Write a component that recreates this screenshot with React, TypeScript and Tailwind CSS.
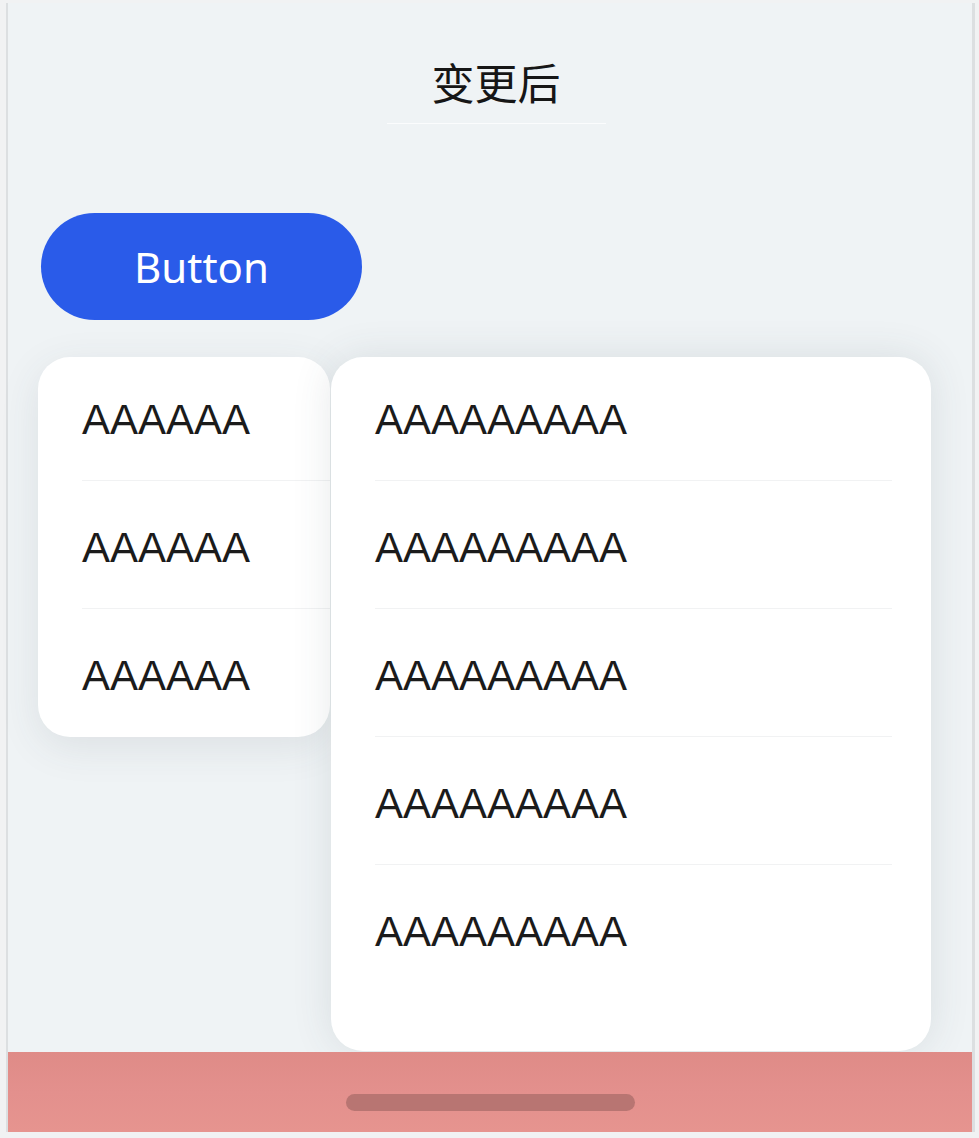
const leftItems = ["AAAAAA", "AAAAAA", "AAAAAA"];
const rightItems = ["AAAAAAAAA", "AAAAAAAAA", "AAAAAAAAA", "AAAAAAAAA", "AAAAAAAAA"];

function MenuRow({ label, first, last, dividerInset }: { label: string; first: boolean; last: boolean; dividerInset: string }) {
  return (
    <div className="flex flex-col">
      <div
        className={
          first
            ? "flex h-[123px] items-center pt-[3px] pl-[44px]"
            : "flex h-[127px] items-center pt-[7px] pl-[44px]"
        }
      >
        <span className="text-[42px] leading-[42px] text-[#1b1b1b] [font-family:'Liberation_Sans',Arial,sans-serif]">{label}</span>
      </div>
      {!last && <div className={`ml-[44px] h-px bg-[#f1f2f3] ${dividerInset}`} />}
    </div>
  );
}

export default function App() {
  return (
    <div className="h-[1138px] w-[979px] bg-[#f1f2f3] pt-[3px] pr-[4px] pb-[6px] pl-[6px]">
      <div className="flex h-full w-full border-l-[2px] border-r-[3px] border-[#dcdfe1] bg-[#eff3f5]">
        <div className="flex w-full flex-col">
          <div className="flex flex-col items-center pl-[12px]">
            <h1 className="mt-[54px] text-[43px] leading-[48px] font-normal text-[#161616] [font-family:'Noto_Sans_CJK_SC',sans-serif]">
              变更后
            </h1>
            <div className="mt-[18px] h-px w-[219px] bg-[#fbfcfd]" />
          </div>

          <button className="mt-[89px] ml-[33px] flex h-[107px] w-[321px] items-center justify-center rounded-full bg-[#2a5be9] text-[42px] text-white [font-family:'Noto_Sans',sans-serif]">
            Button
          </button>

          <div className="mt-[37px] flex items-start">
            <div className="ml-[30px] h-[380px] w-[292px] overflow-hidden rounded-[32px] bg-white shadow-[0_10px_40px_rgba(60,70,80,0.10)]">
              {leftItems.map((item, i) => (
                <MenuRow key={i} label={item} first={i === 0} last={i === leftItems.length - 1} dividerInset="mr-0" />
              ))}
            </div>
            <div className="ml-px h-[694px] w-[600px] overflow-hidden rounded-[32px] bg-white shadow-[0_0_40px_rgba(60,70,80,0.12)]">
              {rightItems.map((item, i) => (
                <MenuRow key={i} label={item} first={i === 0} last={i === rightItems.length - 1} dividerInset="mr-[39px]" />
              ))}
            </div>
          </div>

          <div className="mt-px flex h-[80px] justify-center bg-[linear-gradient(180deg,#df8b87_0%,#e3908d_50%,#e6948f_100%)] pt-[42px]">
            <div className="h-[17px] w-[289px] rounded-full bg-[#b87572]" />
          </div>
        </div>
      </div>
    </div>
  );
}
